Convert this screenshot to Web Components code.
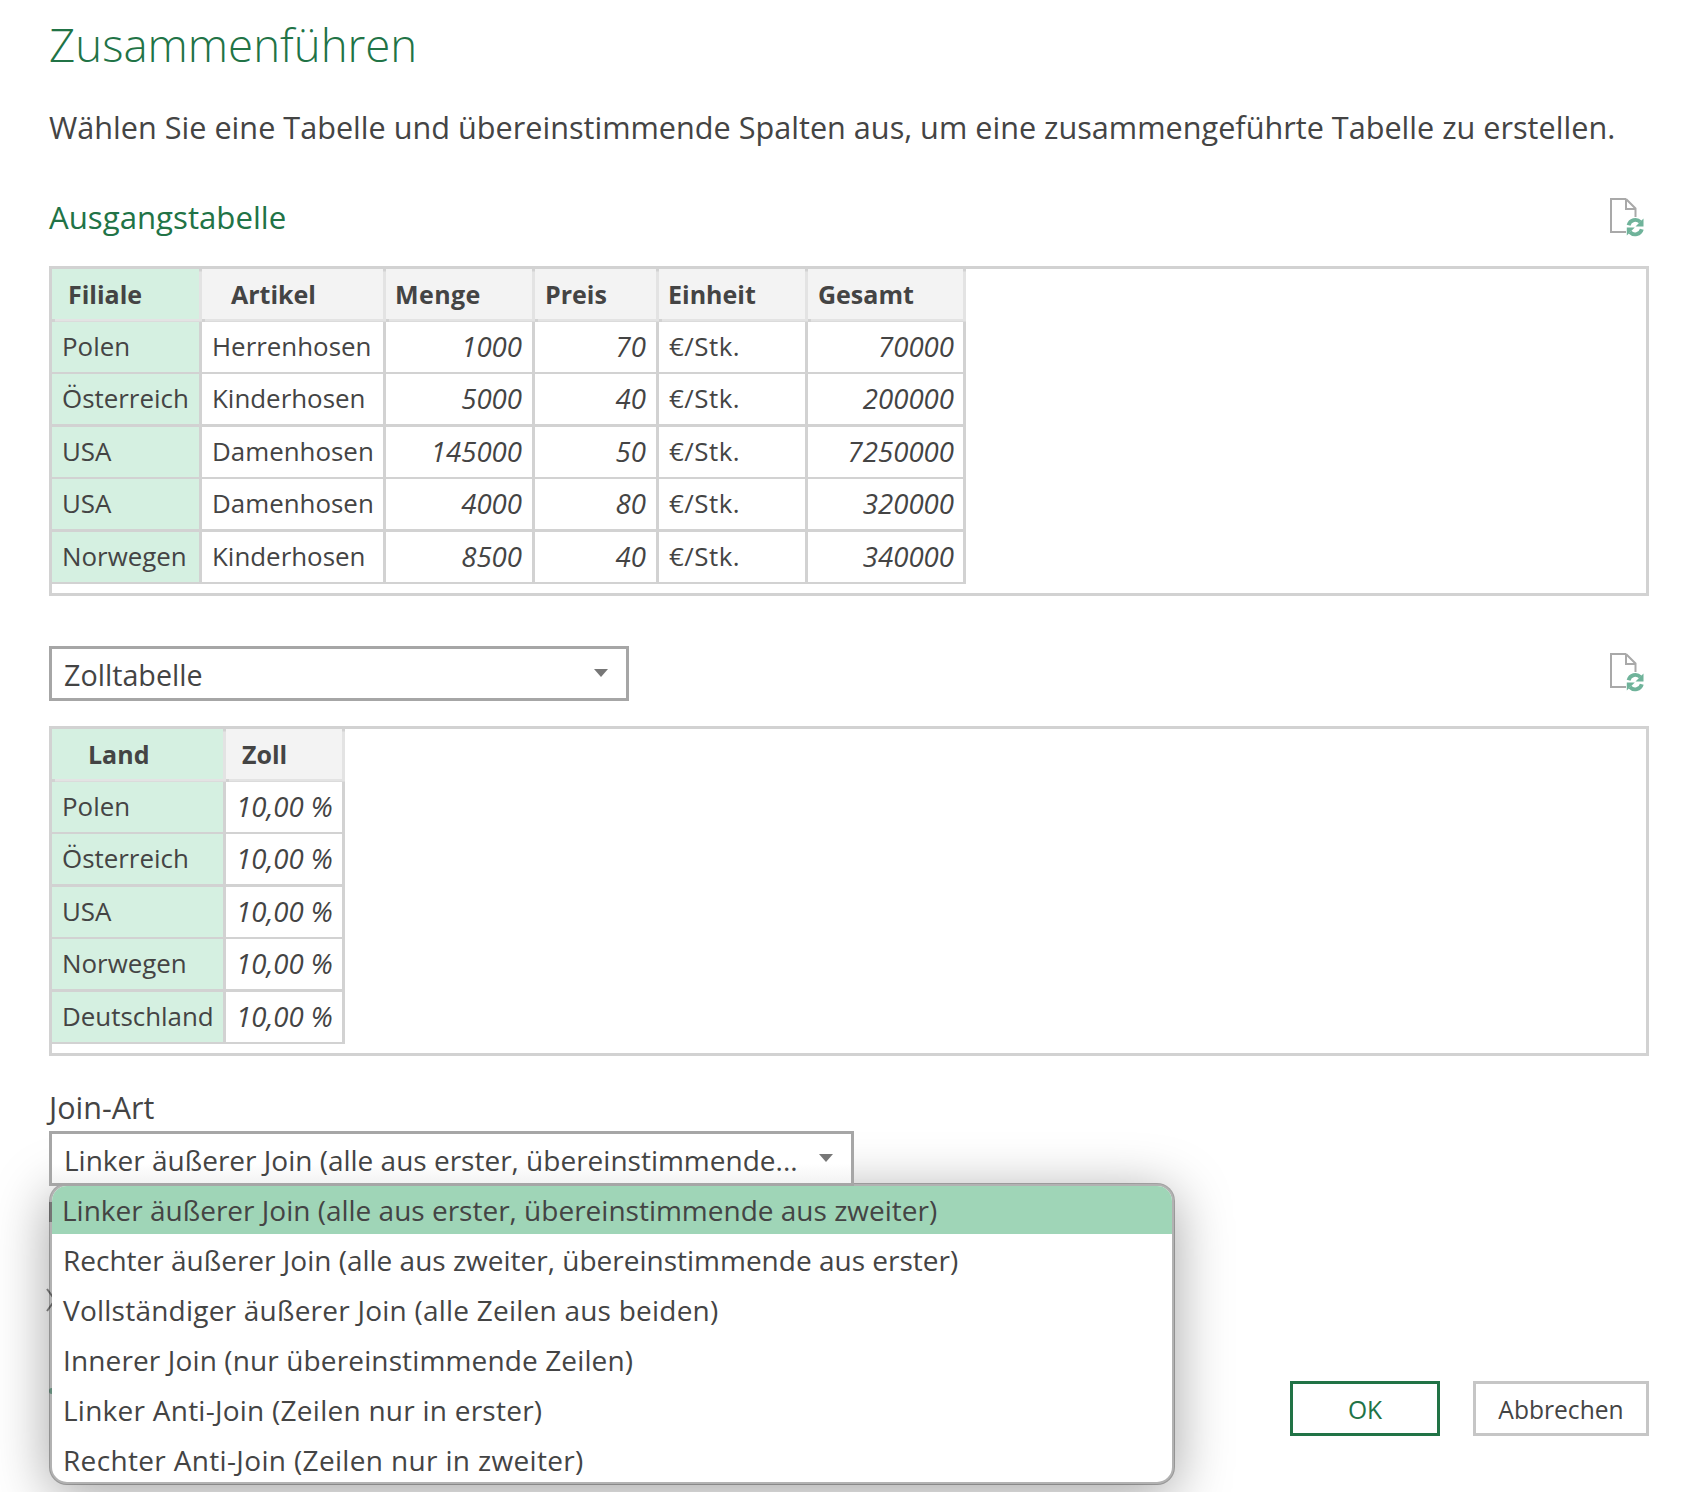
<!DOCTYPE html>
<html lang="de">
<head>
<meta charset="utf-8">
<title>Zusammenführen</title>
<style>
  html, body { margin: 0; background: #fff; }
  body {
    height: 1492px;
    overflow: hidden;
    font-family: "Open Sans", "Noto Sans", sans-serif;
    color: #444;
  }
</style>
</head>
<body>
<merge-dialog>
  <span slot="title">Zusammenführen</span>
  <span slot="intro">Wählen Sie eine Tabelle und übereinstimmende Spalten aus, um eine zusammengeführte Tabelle zu erstellen.</span>

  <section-head slot="first-head">Ausgangstabelle</section-head>
  <table-preview slot="first-table" id="orders"></table-preview>

  <section-head slot="second-head" plain>
    <combo-box style="width:580px;font-size:28.7px">Zolltabelle</combo-box>
  </section-head>
  <table-preview slot="second-table" id="customs"></table-preview>

  <span slot="join-label">Join-Art</span>
  <combo-box slot="join-combo" style="width:805px">Linker äußerer Join (alle aus erster, übereinstimmende...</combo-box>
  <option-list slot="join-options">
    <list-option selected>Linker äußerer Join (alle aus erster, übereinstimmende aus zweiter)</list-option>
    <list-option>Rechter äußerer Join (alle aus zweiter, übereinstimmende aus erster)</list-option>
    <list-option style="letter-spacing:.23px">Vollständiger äußerer Join (alle Zeilen aus beiden)</list-option>
    <list-option style="letter-spacing:.13px">Innerer Join (nur übereinstimmende Zeilen)</list-option>
    <list-option style="letter-spacing:.25px">Linker Anti-Join (Zeilen nur in erster)</list-option>
    <list-option style="letter-spacing:.34px">Rechter Anti-Join (Zeilen nur in zweiter)</list-option>
  </option-list>

  <dialog-button slot="actions" primary>OK</dialog-button>
  <dialog-button slot="actions">Abbrechen</dialog-button>
</merge-dialog>

<script>
const define = (name, css, html) => {
  customElements.define(name, class extends HTMLElement {
    constructor() {
      super()
      this.attachShadow({ mode: 'open' })
      this.shadowRoot.innerHTML = `<style>${css}</style>${html}`
    }
  })
}

const REFRESH_ICON = `
<svg width="36" height="40" viewBox="0 0 36 40" fill="none">
  <path d="M17 2H2V35H17" stroke="#a9a9a9" stroke-width="2"/>
  <path d="M17 2V12H26.5M17 2L26.5 11.5V20" stroke="#a9a9a9" stroke-width="2"/>
  <g stroke="#6fb39a" stroke-width="3.9">
    <path d="M19.6 28.2A7 7 0 0 1 31.4 25"/>
    <path d="M32.8 32.2A7 7 0 0 1 21 35.2"/>
  </g>
  <path d="M34.5 21.5V29.5H26.5Z M17.8 38.5V30.5H25.8Z" fill="#6fb39a"/>
</svg>`

define('refresh-icon', ':host{display:block;width:36px;height:40px}svg{display:block}', REFRESH_ICON)

define('section-head', `
  :host {
    display: flex;
    justify-content: space-between;
    align-items: flex-start;
    width: 1600px;
    color: #217346;
    font-size: 31.2px;
    height: 52px;
    line-height: 54px;
  }
  :host([plain]) { height: 55px; line-height: normal; color: inherit; }
  refresh-icon { margin: 7px 4px 0 0; }
  :host([plain]) refresh-icon { margin-top: 6px; }
`, '<slot></slot><refresh-icon></refresh-icon>')

define('combo-box', `
  :host {
    display: block;
    box-sizing: border-box;
    position: relative;
    height: 55px;
    border: 3px solid #a6a6a6;
    background: #fff;
    padding-left: 12px;
    font-size: 28px;
    line-height: 52px;
    color: #444;
    white-space: nowrap;
  }
  i {
    position: absolute;
    right: 18px;
    top: 20px;
    border: 7.5px solid transparent;
    border-top: 8px solid #777;
    border-bottom: 0;
  }
`, '<slot></slot><i></i>')

define('table-preview', `
  :host {
    display: block;
    box-sizing: border-box;
    width: 1600px;
    height: 330px;
    border: 3px solid #d2d2d2;
  }
  .grid {
    display: inline-grid;
    grid-auto-rows: 50px;
    gap: 2.5px 3px;
    padding: 0 3px 2.5px 0;
    background: #d2d2d2;
    font-size: 25.9px;
    line-height: 49.2px;
    white-space: nowrap;
  }
  .cell { background: #fff; padding: 0 10px; overflow: hidden; }
  .num { text-align: right; font-style: italic; font-size: 27.6px; }
  .key { background: #d5f0e1; }
  .head { background: #f3f3f3; font-size: 25px; font-style: normal; font-weight: 700; text-align: left; line-height: 50px; box-shadow: 3px 2.5px 0 #e3e3e3; }
  .head.key { background: #d5f0e1; }
`, '<div class="grid"></div>')

define('list-option', `
  :host {
    display: block;
    height: 50px;
    padding-left: 11px;
    font-size: 28px;
    line-height: 48px;
    color: #444;
    white-space: nowrap;
  }
  :host([selected]) { background: #9fd5b7; height: 48px; margin-bottom: 2px; padding-left: 10px; }
`, '<slot></slot>')

define('option-list', `
  :host {
    display: block;
    box-sizing: border-box;
    width: 1126px;
    height: 302px;
    overflow: hidden;
    background: #fff padding-box;
    border: 3px solid rgba(0, 0, 0, .3);
    border-radius: 18px;
    box-shadow: 0 10px 55px rgba(0, 0, 0, .36);
  }
`, '<slot></slot>')

define('dialog-button', `
  :host {
    display: block;
    box-sizing: border-box;
    width: 176px;
    height: 55px;
    border: 3px solid #c6c6c6;
    text-align: center;
    font-size: 24.6px;
    line-height: 52px;
    color: #444;
  }
  :host([primary]) { width: 150px; border-color: #217346; color: #217346; }
`, '<slot></slot>')

define('merge-dialog', `
  :host {
    display: block;
    position: relative;
    box-sizing: border-box;
    width: 1682px;
    padding-left: 49px;
  }
  .title { color: #217346; font-size: 45.6px; font-weight: 300; height: 90px; line-height: 88px; }
  .intro { margin-top: 8px; height: 56px; font-size: 30.63px; line-height: 58px; white-space: nowrap; }
  ::slotted([slot=first-head]) { margin-top: 36px; }
  ::slotted([slot=first-table]) { margin-top: 24px; }
  ::slotted([slot=second-head]) { margin-top: 50px; }
  ::slotted([slot=second-table]) { margin-top: 25px; }
  .label { margin-top: 34px; height: 41px; font-size: 30.5px; line-height: 35px; }
  .join { position: relative; }
  ::slotted([slot=join-combo]) { position: relative; z-index: 2; background: linear-gradient(#fff 60%, #f3f3f3); }
  .overlay { position: absolute; left: 0; top: 52px; z-index: 1; }
  .lower { display: flex; justify-content: space-between; width: 1600px; height: 250px; }
  .behind { display: flex; flex-direction: column; align-items: flex-start; }
  .bar { width: 3px; height: 20px; margin-top: 16px; background: #a8a8a8; }
  .chevron { margin: 66px 0 0 -3px; display: block; }
  .dot { width: 5px; height: 6px; margin: 76px 0 0 0; border-radius: 50%; background: #8fc4ae; }
  .actions { align-self: flex-end; display: flex; gap: 33px; }
`, `
  <div class="title"><slot name="title"></slot></div>
  <div class="intro"><slot name="intro"></slot></div>
  <slot name="first-head"></slot>
  <slot name="first-table"></slot>
  <slot name="second-head"></slot>
  <slot name="second-table"></slot>
  <div class="label"><slot name="join-label"></slot></div>
  <div class="join">
    <slot name="join-combo"></slot>
    <div class="overlay"><slot name="join-options"></slot></div>
    <div class="lower">
      <div class="behind">
        <div class="bar"></div>
        <svg class="chevron" width="10" height="24" viewBox="0 0 10 24" fill="none"><path d="M1 1L9 12L1 23" stroke="#8a8a8a" stroke-width="2"/></svg>
        <div class="dot"></div>
      </div>
      <div class="actions"><slot name="actions"></slot></div>
    </div>
  </div>
`)

const fillTable = (el, columns, rows) => {
  const grid = el.shadowRoot.querySelector('.grid')
  grid.style.gridTemplateColumns = columns.map(c => `${c.width}px`).join(' ')
  columns.forEach((c, i) => {
    const head = document.createElement('div')
    head.className = `cell head${i === 0 ? ' key' : ''}`
    head.style.paddingLeft = `${c.indent}px`
    if (c.headSpacing) head.style.letterSpacing = c.headSpacing
    head.textContent = c.name
    grid.appendChild(head)
  })
  rows.forEach(row => {
    row.forEach((value, i) => {
      const cell = document.createElement('div')
      cell.className = `cell${i === 0 ? ' key' : ''}${columns[i].num ? ' num' : ''}`
      if (columns[i].spacing) cell.style.letterSpacing = columns[i].spacing
      if (columns[i].pad) cell.style.paddingRight = columns[i].pad
      cell.textContent = value
      grid.appendChild(cell)
    })
  })
}

fillTable(document.getElementById('orders'), [
  { name: 'Filiale', width: 147, indent: 16 },
  { name: 'Artikel', width: 181, indent: 29 },
  { name: 'Menge', width: 146, indent: 9, num: true, headSpacing: '.4px' },
  { name: 'Preis', width: 121, indent: 10, num: true },
  { name: 'Einheit', width: 146, indent: 9, spacing: '.5px' },
  { name: 'Gesamt', width: 155, indent: 10, num: true, pad: '9px' },
], [
  ['Polen', 'Herrenhosen', '1000', '70', '€/Stk.', '70000'],
  ['Österreich', 'Kinderhosen', '5000', '40', '€/Stk.', '200000'],
  ['USA', 'Damenhosen', '145000', '50', '€/Stk.', '7250000'],
  ['USA', 'Damenhosen', '4000', '80', '€/Stk.', '320000'],
  ['Norwegen', 'Kinderhosen', '8500', '40', '€/Stk.', '340000'],
])

fillTable(document.getElementById('customs'), [
  { name: 'Land', width: 171, indent: 36 },
  { name: 'Zoll', width: 116, indent: 16, num: true },
], [
  ['Polen', '10,00 %'],
  ['Österreich', '10,00 %'],
  ['USA', '10,00 %'],
  ['Norwegen', '10,00 %'],
  ['Deutschland', '10,00 %'],
])
</script>
</body>
</html>
